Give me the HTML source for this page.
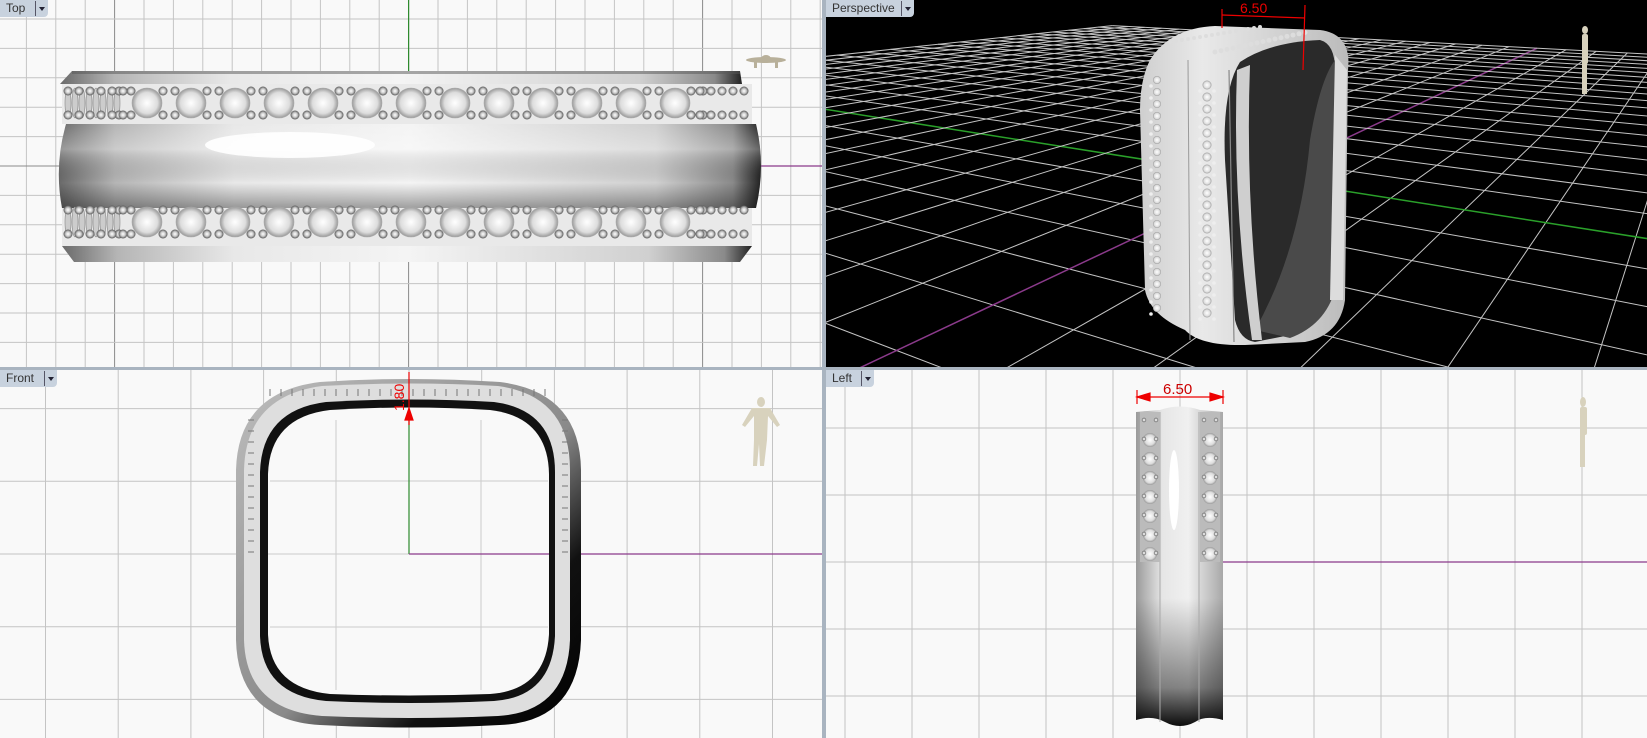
<!DOCTYPE html>
<html><head><meta charset="utf-8">
<style>
html,body{margin:0;padding:0;background:#9c9c9c;width:1647px;height:738px;overflow:hidden;}
body{position:relative;font-family:"Liberation Sans",sans-serif;}
.lbl{position:absolute;height:17px;background:#c8d2de;border-radius:0 0 4px 0;font-size:12px;color:#333;line-height:17px;padding-left:6px;box-sizing:border-box;}
.lbl i{position:absolute;right:0;top:1px;width:12px;height:15px;border-left:1px solid #556;}
.lbl i:after{content:"";position:absolute;left:3px;top:6px;border-left:3px solid transparent;border-right:3px solid transparent;border-top:4px solid #223;}
svg{display:block}
</style></head><body>
<svg id="s" width="1647" height="738" xmlns="http://www.w3.org/2000/svg" style="position:absolute;left:0;top:0">
<defs>
<clipPath id="c1"><rect x="0" y="0" width="822" height="367"/></clipPath>
<clipPath id="c2"><rect x="826" y="0" width="821" height="367"/></clipPath>
<clipPath id="c3"><rect x="0" y="370" width="822" height="368"/></clipPath>
<clipPath id="c4"><rect x="826" y="370" width="821" height="368"/></clipPath>
<linearGradient id="gh" x1="0" x2="1" y1="0" y2="0">
<stop offset="0" stop-color="#6a6a6a"/><stop offset="0.08" stop-color="#b5b5b5"/><stop offset="0.25" stop-color="#e8e8e8"/><stop offset="0.5" stop-color="#f4f4f4"/><stop offset="0.85" stop-color="#d0d0d0"/><stop offset="0.96" stop-color="#8a8a8a"/><stop offset="1" stop-color="#222"/></linearGradient>
<linearGradient id="gv" x1="0" x2="0" y1="0" y2="1">
<stop offset="0" stop-color="#fff" stop-opacity="0"/><stop offset="0.3" stop-color="#fff" stop-opacity="0.3"/><stop offset="0.7" stop-color="#000" stop-opacity="0"/><stop offset="1" stop-color="#000" stop-opacity="0.35"/></linearGradient>
<linearGradient id="gl" x1="0" x2="1" y1="0" y2="0">
<stop offset="0" stop-color="#9a9a9a"/><stop offset="0.3" stop-color="#e6e6e6"/><stop offset="0.6" stop-color="#f0f0f0"/><stop offset="1" stop-color="#a8a8a8"/></linearGradient>
<linearGradient id="glv" x1="0" x2="0" y1="0" y2="1">
<stop offset="0" stop-color="#000" stop-opacity="0"/><stop offset="0.6" stop-color="#000" stop-opacity="0"/><stop offset="0.88" stop-color="#000" stop-opacity="0.45"/><stop offset="1" stop-color="#000" stop-opacity="0.95"/></linearGradient>
<linearGradient id="gf" x1="0" x2="1" y1="0" y2="1">
<stop offset="0" stop-color="#bdbdbd"/><stop offset="0.55" stop-color="#8a8a8a"/><stop offset="0.75" stop-color="#111"/><stop offset="1" stop-color="#000"/></linearGradient>
<linearGradient id="gp" x1="0" x2="1" y1="0" y2="0">
<stop offset="0" stop-color="#cfcfcf"/><stop offset="0.3" stop-color="#e9e9e9"/><stop offset="0.6" stop-color="#d6d6d6"/><stop offset="1" stop-color="#bbb"/></linearGradient>
<radialGradient id="gs"><stop offset="0" stop-color="#fff"/><stop offset="0.7" stop-color="#ddd"/><stop offset="1" stop-color="#999"/></radialGradient>
<radialGradient id="gb"><stop offset="0" stop-color="#fff"/><stop offset="0.5" stop-color="#ccc"/><stop offset="1" stop-color="#555"/></radialGradient>
</defs>
<rect x="0" y="0" width="822" height="367" fill="#f9f9f9"/>
<rect x="826" y="0" width="821" height="367" fill="#000"/>
<rect x="0" y="370" width="822" height="368" fill="#f9f9f9"/>
<rect x="826" y="370" width="821" height="368" fill="#f9f9f9"/>
<g id="g1" clip-path="url(#c1)"></g>
<g id="g2" clip-path="url(#c2)"></g>
<g id="g3" clip-path="url(#c3)"></g>
<g id="g4" clip-path="url(#c4)"></g>
</svg>
<div class="lbl" style="left:0;top:0;width:48px">Top<i></i></div>
<div class="lbl" style="top:0;width:88px;left:826px">Perspective<i></i></div>
<div class="lbl" style="left:0;top:370px;width:57px">Front<i></i></div>
<div class="lbl" style="left:826px;top:370px;width:48px">Left<i></i></div>
<script>
var NS="http://www.w3.org/2000/svg";
function el(g,t,a){var e=document.createElementNS(NS,t);for(var k in a)e.setAttribute(k,a[k]);document.getElementById(g).appendChild(e);return e;}
function grid(g,x0,y0,x1,y1,ox,oy,sp,maj){
 for(var i=-40;i<40;i++){var x=ox+i*sp;if(x<x0||x>x1)continue;el(g,'line',{x1:x,y1:y0,x2:x,y2:y1,stroke:(maj&&i%maj==0)?'#8a8a8a':'#c4c4c4','stroke-width':1});}
 for(var i=-40;i<40;i++){var y=oy+i*sp;if(y<y0||y>y1)continue;el(g,'line',{x1:x0,y1:y,x2:x1,y2:y,stroke:(maj&&i%maj==0)?'#8a8a8a':'#c4c4c4','stroke-width':1});}
}
grid('g1',0,0,822,367,408.6,166,29.4,10);
grid('g3',0,370,822,738,409,554,72.7,0);
grid('g4',826,370,1647,738,1180,562,67,0);
el('g1','line',{x1:408.6,y1:0,x2:408.6,y2:166,stroke:'#2e8b2e','stroke-width':1.2});
el('g1','line',{x1:408.6,y1:166,x2:822,y2:166,stroke:'#8b3a8b','stroke-width':1.2});
el('g3','line',{x1:409,y1:400,x2:409,y2:554,stroke:'#2e8b2e','stroke-width':1.2});
el('g3','line',{x1:409,y1:554,x2:822,y2:554,stroke:'#8b3a8b','stroke-width':1.2});
el('g4','line',{x1:1180,y1:562,x2:1647,y2:562,stroke:'#8b3a8b','stroke-width':1.2});
(function(){
 var f=800,hy=-40,H=2.725,cx=1262,Z0=10,a=30*Math.PI/180,u=0.85,N=20;
 var ca=Math.cos(a),sa=Math.sin(a);
 function W(p,q){return [-p*ca+q*sa, Z0+p*sa+q*ca];}
 function P(w){return [cx+f*w[0]/w[1], hy+f*H/w[1]];}
 function seg(A,B,col,sw){
  var zmin=1.2;
  if(A[1]<zmin&&B[1]<zmin)return;
  if(A[1]<zmin){var t=(zmin-A[1])/(B[1]-A[1]);A=[A[0]+t*(B[0]-A[0]),zmin];}
  if(B[1]<zmin){var t=(zmin-B[1])/(A[1]-B[1]);B=[B[0]+t*(A[0]-B[0]),zmin];}
  var p=P(A),q=P(B);
  el('g2','line',{x1:p[0],y1:p[1],x2:q[0],y2:q[1],stroke:col,'stroke-width':sw});
 }
 for(var i=-N;i<=N;i++){
  seg(W(i*u,-N*u),W(i*u,N*u),i==0?'#8b3a8b':'#c4c4c4',i==0?1.5:1);
  seg(W(-N*u,i*u),W(N*u,i*u),i==0?'#2aa02a':'#c4c4c4',i==0?1.5:1);
 }
})();
</script>
<svg width="1647" height="738" xmlns="http://www.w3.org/2000/svg" style="position:absolute;left:0;top:0">
<g clip-path="url(#c1)">
 <path d="M72 71 L740 71 L742 84 L60 84 Z" fill="url(#gh)"/>
 <rect x="72" y="71" width="668" height="3" fill="#555" opacity="0.5"/>
 <rect x="62" y="84" width="690" height="40" fill="#e9e9e9"/>
 <path d="M66 124 Q54 166 62 208 L756 208 Q766 166 756 124 Z" fill="url(#gh)"/>
 <path d="M66 124 Q54 166 62 208 L756 208 Q766 166 756 124 Z" fill="url(#gv)"/>
 <ellipse cx="290" cy="145" rx="85" ry="13" fill="#fff" opacity="0.9"/>
 <rect x="62" y="208" width="690" height="38" fill="#e9e9e9"/>
 <path d="M62 246 L752 246 L740 262 L74 262 Z" fill="url(#gh)"/>
 <g id="stonesTop"></g>
 <g fill="#b8b09a"><ellipse cx="766" cy="60" rx="20" ry="3"/><ellipse cx="766" cy="59" rx="5" ry="4"/><rect x="754" y="60" width="3" height="8"/><rect x="775" y="60" width="3" height="8"/></g>
</g>
<g clip-path="url(#c2)">
 <path d="M1150 60 Q1170 28 1215 26 L1320 30 Q1352 34 1348 70 L1345 300 Q1340 335 1305 342 L1245 345 Q1200 346 1185 330 Q1150 315 1145 290 L1140 110 Q1140 80 1150 60 Z" fill="url(#gp)"/>
 <path d="M1240 62 Q1270 42 1320 40 Q1335 44 1335 70 L1332 290 Q1328 320 1290 335 L1255 342 Q1240 340 1235 320 L1225 160 Q1222 90 1240 62 Z" fill="#2a2a2a"/>
 <path d="M1255 330 Q1300 250 1310 140 Q1320 80 1335 60 L1335 290 Q1325 325 1290 338 Z" fill="#4a4a4a"/>
 <path d="M1335 55 L1347 70 L1343 300 L1330 300 Z" fill="#dcdcdc"/>
 <path d="M1237 70 Q1232 200 1252 340 L1262 340 Q1245 200 1250 65 Z" fill="#cfcfcf"/>
 <line x1="1188" y1="60" x2="1190" y2="340" stroke="#999" stroke-width="1"/>
 <line x1="1229" y1="70" x2="1234" y2="342" stroke="#888" stroke-width="1.2"/>
 <g id="stonesP"></g>
 <g stroke="#e00" stroke-width="1.2" fill="#e00">
  <line x1="1222" y1="15" x2="1305" y2="18"/><line x1="1222" y1="9" x2="1222" y2="28"/><line x1="1305" y1="5" x2="1303" y2="70"/>
 </g>
 <text x="1240" y="13" font-size="14" fill="#e00" font-family="Liberation Sans, sans-serif">6.50</text>
 <g fill="#d8d2bd"><ellipse cx="1585" cy="30" rx="3" ry="4"/><rect x="1582" y="34" width="6" height="30" rx="2"/><rect x="1582" y="62" width="5" height="32"/></g>
</g>
<g clip-path="url(#c3)">
 <path d="M320 382 Q409 376 500 382 Q580 392 581 470 L581 640 Q578 722 500 725 Q409 730 320 725 Q238 720 236 640 L236 470 Q238 392 320 382 Z" fill="url(#gf)"/>
 <path d="M322 386 Q409 381 498 386 Q570 396 570 470 L570 640 Q567 712 498 716 Q409 720 322 716 Q246 710 244 640 L244 470 Q246 396 322 386 Z" fill="#dedede"/>
 <path d="M326 402 Q409 397 494 402 Q555 410 555 472 L555 636 Q552 697 494 701 Q409 705 326 701 Q262 695 260 636 L260 472 Q262 410 326 402 Z" fill="#111"/>
 <path d="M330 410 Q409 405 490 410 Q548 417 549 474 L549 634 Q546 690 490 694 Q409 697 330 694 Q270 688 268 634 L268 474 Q270 417 330 410 Z" fill="#f9f9f9"/>
 <g stroke-width="1"><line x1="268" y1="554" x2="549" y2="554" stroke="#ccc"/><line x1="336" y1="420" x2="336" y2="690" stroke="#ccc"/><line x1="481" y1="420" x2="481" y2="690" stroke="#ccc"/><line x1="270" y1="481" x2="548" y2="481" stroke="#ccc"/><line x1="270" y1="627" x2="548" y2="627" stroke="#ccc"/><line x1="409" y1="410" x2="409" y2="554" stroke="#2e8b2e" stroke-width="1.2"/><line x1="409" y1="554" x2="549" y2="554" stroke="#8b3a8b" stroke-width="1.2"/></g>
 <g id="ticks" stroke="#777" stroke-width="1"></g>
 <g stroke="#e00" stroke-width="1.2" fill="#e00"><line x1="409" y1="372" x2="409" y2="425"/><path d="M405 420 L409 408 L413 420 Z"/></g>
 <text transform="translate(404,411) rotate(-90)" font-size="14" fill="#e00" font-family="Liberation Sans, sans-serif">1.80</text>
 <g fill="#d8d2bd"><ellipse cx="761" cy="402" rx="4" ry="5"/><path d="M752 408 L770 408 L780 425 L777 427 L768 416 L767 440 L764 466 L760 466 L759 444 L757 466 L753 466 L754 440 L754 416 L745 427 L742 425 Z"/></g>
</g>
<g clip-path="url(#c4)">
 <path d="M1136 412 L1160 410 Q1180 403 1200 410 L1223 412 L1223 720 Q1205 715 1195 722 Q1180 730 1165 722 Q1152 715 1136 720 Z" fill="url(#gl)"/>
 <path d="M1136 412 L1160 410 Q1180 403 1200 410 L1223 412 L1223 720 Q1205 715 1195 722 Q1180 730 1165 722 Q1152 715 1136 720 Z" fill="url(#glv)"/>
 <ellipse cx="1174" cy="490" rx="5" ry="40" fill="#fff"/>
 <line x1="1160" y1="412" x2="1160" y2="722" stroke="#aaa"/>
 <line x1="1199" y1="412" x2="1199" y2="722" stroke="#aaa"/>
 <g id="stonesL"></g>
 <g stroke="#e00" stroke-width="1.2" fill="#e00"><line x1="1137" y1="397" x2="1223" y2="397"/><line x1="1137" y1="390" x2="1137" y2="404"/><line x1="1223" y1="390" x2="1223" y2="404"/><path d="M1137 397 L1150 393 L1150 401 Z"/><path d="M1223 397 L1210 393 L1210 401 Z"/></g>
 <text x="1163" y="394" font-size="15" fill="#c00" font-family="Liberation Sans, sans-serif">6.50</text>
 <g fill="#d8d2bd"><ellipse cx="1583" cy="402" rx="3" ry="5"/><rect x="1580" y="407" width="7" height="28" rx="2"/><rect x="1580" y="433" width="5" height="34"/></g>
</g>
<rect x="822" y="0" width="4" height="738" fill="#a9b4c0"/>
<rect x="0" y="367" width="1647" height="3" fill="#a9b4c0"/>
</svg>
<script>
function E(p,t,a){var e=document.createElementNS(NS,t);for(var k in a)e.setAttribute(k,a[k]);p.appendChild(e);}
var st=document.getElementById('stonesTop');
[103,222].forEach(function(cy){
 for(var x=68;x<120;x+=7){E(st,'ellipse',{cx:x,cy:cy,rx:3,ry:15,fill:'#ccc',stroke:'#888','stroke-width':0.6});}
 for(var x=147;x<700;x+=44){E(st,'circle',{cx:x,cy:cy,r:15,fill:'url(#gs)',stroke:'#aaa','stroke-width':0.6});}
 for(var x=125;x<720;x+=44){[-6,6].forEach(function(dx){[-12,12].forEach(function(dy){E(st,'circle',{cx:x+dx,cy:cy+dy,r:4.5,fill:'url(#gb)'});});});}
 for(var x=68;x<125;x+=11){[-12,12].forEach(function(dy){E(st,'circle',{cx:x,cy:cy+dy,r:4.5,fill:'url(#gb)'});});}
 for(var x=700;x<752;x+=11){[-12,12].forEach(function(dy){E(st,'circle',{cx:x,cy:cy+dy,r:4.5,fill:'url(#gb)'});});}
});
var sl=document.getElementById('stonesL');
[1150,1210].forEach(function(cx){
 E(sl,'rect',{x:cx-10,y:412,width:20,height:150,fill:'#bbb'});
 for(var y=440;y<560;y+=19){E(sl,'circle',{cx:cx,cy:y,r:7,fill:'url(#gs)'});}
 for(var y=420;y<562;y+=19){[-6,6].forEach(function(dx){E(sl,'circle',{cx:cx+dx,cy:y,r:2.2,fill:'url(#gb)'});});}
});
var sp=document.getElementById('stonesP');
for(var i=0;i<20;i++){var y=80+i*12;E(sp,'circle',{cx:1157,cy:y,r:4,fill:'url(#gs)'});E(sp,'circle',{cx:1151,cy:y+6,r:1.8,fill:'#eee'});}
for(var i=0;i<20;i++){var y=85+i*12;E(sp,'circle',{cx:1207,cy:y,r:4.5,fill:'url(#gs)'});E(sp,'circle',{cx:1200,cy:y+6,r:1.8,fill:'#eee'});E(sp,'circle',{cx:1214,cy:y+6,r:1.8,fill:'#eee'});}
for(var i=0;i<16;i++){E(sp,'circle',{cx:1215+i*6,cy:52-i*1.3,r:2.5,fill:'#ddd'});E(sp,'circle',{cx:1170+i*6,cy:42-i*1.0,r:2,fill:'#ddd'});}
var tk=document.getElementById('ticks');
for(var x=270;x<550;x+=11){E(tk,'line',{x1:x,y1:389,x2:x,y2:396});}
for(var y=420;y<555;y+=11){E(tk,'line',{x1:248,y1:y,x2:254,y2:y});E(tk,'line',{x1:562,y1:y,x2:568,y2:y});}
</script>
</body></html>
